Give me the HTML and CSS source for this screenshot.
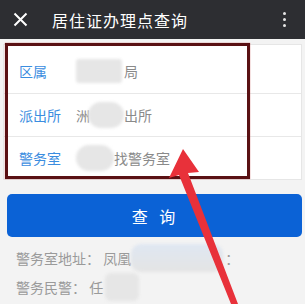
FILE: index.html
```html
<!DOCTYPE html>
<html lang="zh">
<head>
<meta charset="utf-8">
<link rel="stylesheet" href="styles.css">
</head>
<body>
<div class="page">
  <header class="topbar">
    <svg class="close" width="15" height="15" viewBox="0 0 15 15"><path d="M1.5 1.5L13.5 13.5M13.5 1.5L1.5 13.5" stroke="#fff" stroke-width="2"/></svg>
    <span class="title">居住证办理点查询</span>
    <span class="more"><i></i><i></i><i></i></span>
  </header>

  <section class="card">
    <div class="row first">
      <span class="label">区属</span>
      <span class="value"><span class="blob blob-sq"></span>局</span>
    </div>
    <div class="row">
      <span class="label">派出所</span>
      <span class="value">洲<span class="blob blob-round"></span>出所</span>
    </div>
    <div class="row">
      <span class="label">警务室</span>
      <span class="value"><span class="blob blob-round2"></span>找警务室</span>
    </div>
  </section>

  <button class="query">查 询</button>

  <div class="info">
    <p>警务室地址：&nbsp;凤凰<span class="blob blob-wide"></span>：</p>
    <p>警务民警：&nbsp;任<span class="blob blob-small"></span></p>
  </div>

  <div class="highlight"></div>
  <svg class="arrow" width="305" height="304" viewBox="0 0 305 304">
    <polygon points="183,149 169,178 179,175 231,304 238,304 188,173 199,172" fill="#e8313a"/>
  </svg>
</div>
</body>
</html>
```
FILE: styles.css
```css
* { box-sizing: border-box; }
html, body { margin: 0; padding: 0; }
body {
  background: #f3f3f3;
  font-family: "Noto Sans CJK SC", "Noto Sans", sans-serif;
  width: 305px;
  height: 304px;
  overflow: hidden;
}
.page { position: relative; width: 305px; height: 304px; }

.topbar {
  height: 39px;
  background: #2d2e32;
  display: flex;
  align-items: center;
  color: #fff;
}
.close { flex: none; margin-left: 13px; }
.title {
  margin-left: 24px;
  font-size: 16px;
  letter-spacing: 1px;
  flex: 1;
}
.more {
  display: flex;
  flex-direction: column;
  gap: 3px;
  margin-right: 19px;
}
.more i {
  display: block;
  width: 3px;
  height: 3px;
  border-radius: 50%;
  background: #e6e6e6;
}

.card {
  margin: 5px 3px 0 3px;
  background: #fff;
  border: 1px solid #e6e6e6;
}
.row {
  height: 43px;
  display: flex;
  align-items: center;
  padding-left: 15px;
  font-size: 14px;
  border-top: 1px solid #e8e8e8;
}
.row.first { height: 48px; border-top: none; padding-top: 3px; }
.label { width: 57px; color: #3b8ddf; }
.value { color: #8a8a8a; display: flex; align-items: center; }

.blob {
  display: inline-block;
  background: #e6e6e6;
  filter: blur(1.5px);
}
.blob-sq { width: 46px; height: 24px; border-radius: 3px; margin-right: 2px; }
.blob-round { width: 36px; height: 26px; border-radius: 14px; margin: 0 0 0 -2px; }
.blob-round2 { width: 38px; height: 26px; border-radius: 14px; margin-right: 0; }
.blob-wide {
  width: 92px; height: 28px; border-radius: 10px;
  background: linear-gradient(#dfe7f2, #e4e4e4);
  margin-right: 2px;
}
.blob-small { width: 34px; height: 28px; border-radius: 6px; margin-left: 2px; }

.query {
  display: block;
  margin: 14px 3px 0 7px;
  width: 295px;
  height: 43px;
  border: none;
  border-radius: 5px;
  background: #0b62d6;
  color: #fff;
  font-family: "Noto Sans CJK SC", sans-serif;
  font-size: 16px;
  letter-spacing: 4px;
  padding-left: 8px;
}

.info { padding: 6px 0 0 16px; }
.info p {
  margin: 0;
  height: 29px;
  display: flex;
  align-items: center;
  font-size: 14px;
  color: #9a9a9a;
}

.highlight {
  position: absolute;
  left: 5px;
  top: 43px;
  width: 245px;
  height: 136px;
  border: 3px solid #5a1114;
  box-shadow: 0 0 1px #c05050;
}
.arrow { position: absolute; left: 0; top: 0; }
```
